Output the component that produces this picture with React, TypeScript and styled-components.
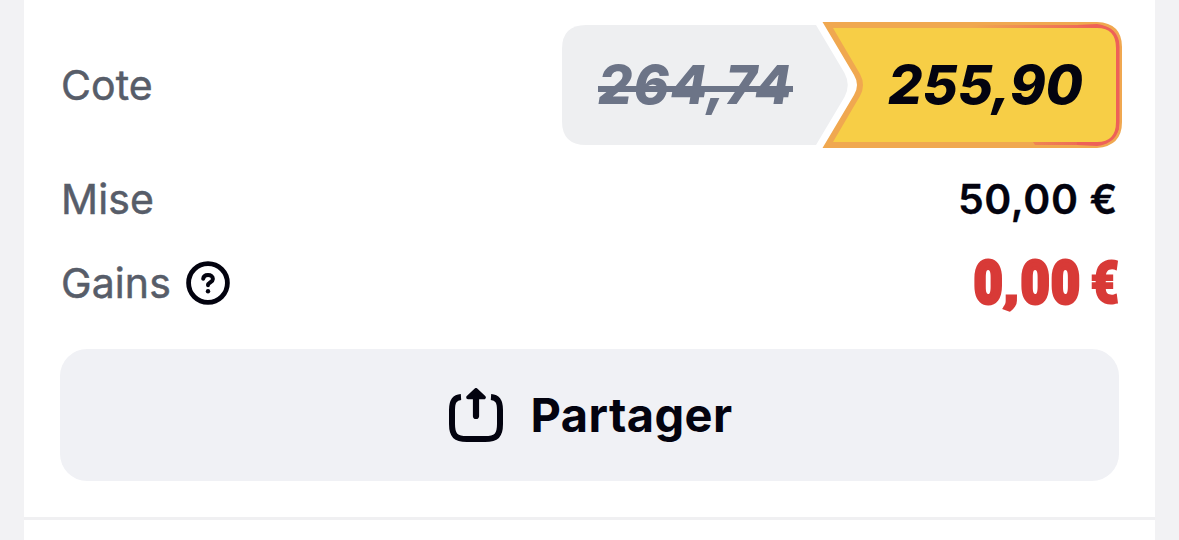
import styled, { createGlobalStyle } from "styled-components";

const EstiloGlobal = createGlobalStyle`
	* {
		box-sizing: border-box;
	}

	body {
		margin: 0;
		background-color: #f2f2f4;
		font-family: Inter, "Liberation Sans", sans-serif;
		color: #03030f;
	}
`;

const Pagina = styled.main`
	height: 540px;
	padding: 0 24px;
	overflow: hidden;
`;

const Cartao = styled.section`
	height: 517px;
	padding: 22px 36px 0;
	background-color: #ffffff;
`;

const ProximoCartao = styled.section`
	height: 23px;
	background-color: #ffffff;
	border-top: 3px solid #f0f0f2;
`;

const Linha = styled.div<{ $altura: number }>`
	height: ${({ $altura }) => $altura}px;
	display: flex;
	align-items: center;
	justify-content: space-between;
`;

const Rotulo = styled.span`
	display: flex;
	align-items: center;
	gap: 15px;
	font-size: 41px;
	line-height: 50px;
	font-weight: 400;
	letter-spacing: 0.1px;
	padding-left: 1px;
	color: #575d69;
	-webkit-text-stroke: 0.5px #575d69;
`;

const Cotes = styled.div`
	display: flex;
	align-items: center;
	height: 126px;
	margin-right: -3px;
`;

const Cote = styled.div<{ $largura: number; $recuo: number }>`
	position: relative;
	display: flex;
	align-items: center;
	width: ${({ $largura }) => $largura}px;
	height: 126px;
	padding-left: ${({ $recuo }) => $recuo}px;
`;

const CoteAtual = styled(Cote)`
	margin-left: -26px;
`;

const Fundo = styled.svg`
	position: absolute;
	inset: 0;
`;

const ValorCote = styled.span`
	position: relative;
	font-size: 54px;
	line-height: 64px;
	font-weight: 800;
	font-style: italic;
	white-space: nowrap;
`;

const ValorAntigo = styled(ValorCote)`
	color: #6c7487;
	letter-spacing: 1px;

	&::after {
		content: "";
		position: absolute;
		left: 0;
		right: 0;
		top: 33px;
		height: 6px;
		background-color: #6c7487;
	}
`;

const Mise = styled.span`
	margin-right: 1px;
	font-size: 41px;
	line-height: 50px;
	font-weight: 600;
	letter-spacing: 0.6px;
	-webkit-text-stroke: 0.3px #03030f;
	white-space: nowrap;
`;

const Gains = styled.span`
	font-family: Roboto, "Liberation Sans", sans-serif;
	font-size: 59px;
	line-height: 64px;
	font-weight: 900;
	letter-spacing: 2.2px;
	word-spacing: -6px;
	margin-right: -2px;
	color: #d83a37;
	-webkit-text-stroke: 4px #d83a37;
	transform: scaleX(0.83);
	transform-origin: right center;
	white-space: nowrap;
`;

const Virgula = styled.span`
	display: inline-block;
	margin: 0 1px;
	transform: scale(1.15, 0.75);
	transform-origin: center 46px;
`;

const Moeda = styled.span`
	-webkit-text-stroke-width: 2px;
`;

const BotaoPartager = styled.button`
	width: 1059px;
	height: 132px;
	margin: 34px 0 0;
	padding: 0 0 0 2px;
	display: flex;
	align-items: center;
	justify-content: center;
	gap: 28px;
	border: 0;
	border-radius: 27px;
	background-color: #f0f1f5;
	color: #03030f;
	font-family: inherit;
	font-size: 47px;
	line-height: 58px;
	font-weight: 700;
	letter-spacing: 0.4px;
`;

const IconeAjuda = () => (
	<svg width="44" height="44" viewBox="0 0 44 44" fill="none" stroke="#03030f">
		<circle cx="22" cy="22" r="19.4" strokeWidth="4.8" />
		<path
			d="M17.2 17.800c.3-2.400 2.200-3.800 4.800-3.800 2.800 0 4.900 1.500 4.900 4 0 3.300-4.700 3.200-4.900 6.200"
			strokeWidth="4"
			strokeLinecap="round"
			strokeLinejoin="round"
		/>
		<circle cx="22" cy="30.200" r="2.200" fill="#03030f" stroke="none" />
	</svg>
);

const IconePartager = () => (
	<svg width="54" height="54" viewBox="0 0 54 54" fill="none">
		<path
			d="M12 9.1C5.4 9.5 3 13.8 3 22v14c0 11.4 3.6 15 15 15h18c11.4 0 15-3.6 15-15V22c0-8.2-2.4-12.500-9-12.900"
			stroke="#03030f"
			strokeWidth="6"
		/>
		<path d="M27 9v19" stroke="#03030f" strokeWidth="6.200" strokeLinecap="round" />
		<path
			d="M27 1.800l8 7.600H19z"
			fill="#03030f"
			stroke="#03030f"
			strokeWidth="3.600"
			strokeLinejoin="round"
		/>
	</svg>
);

const FundoAntigo = () => (
	<Fundo width="287" height="126" viewBox="0 0 287 126">
		<path
			d="M25 3H255L283.500 51Q290 63 283.500 75L255 123H25Q1 123 1 99V27Q1 3 25 3Z"
			fill="#eeeff1"
		/>
	</Fundo>
);

const FundoAtual = () => (
	<Fundo width="300" height="126" viewBox="0 0 300 126">
		<defs>
			<linearGradient id="brilhoTopo" x1="150" x2="275" y1="0" y2="0" gradientUnits="userSpaceOnUse">
				<stop offset="0" stopColor="#f0a850" />
				<stop offset="1" stopColor="#ee6158" />
			</linearGradient>
		</defs>
		<path
			d="M0.500 0H275Q300 1 300 25V100Q300 124 275 126H0.500L32 73Q38 63 32 53Z"
			fill="#f0a850"
		/>
		<path
			d="M150 3H275Q297 4 297.500 25V100Q297 122 275 123H213L211 120H150Z"
			fill="url(#brilhoTopo)"
		/>
		{/* o vermelho engrossa nos cantos */}
		<path
			d="M255 3L275 2Q292 4 297 20L294 27L275 6ZM294 100L297 107Q290 123 275 124L255 123V120H275Z"
			fill="#ee6158"
		/>
		<path
			d="M11 6H275Q294 6 294 26V100Q294 120 275 120H11L38 74Q44 63 38 52Z"
			fill="#f7ce46"
		/>
	</Fundo>
);

const App = () => (
	<>
		<EstiloGlobal />
		<Pagina>
			<Cartao>
				<Linha $altura={126}>
					<Rotulo>Cote</Rotulo>
					<Cotes>
						<Cote $largura={287} $recuo={37}>
							<FundoAntigo />
							<ValorAntigo>264,74</ValorAntigo>
						</Cote>
						<CoteAtual $largura={300} $recuo={66}>
							<FundoAtual />
							<ValorCote>255,90</ValorCote>
						</CoteAtual>
					</Cotes>
				</Linha>
				<Linha $altura={102}>
					<Rotulo>Mise</Rotulo>
					<Mise>50,00 €</Mise>
				</Linha>
				<Linha $altura={65}>
					<Rotulo>
						Gains
						<IconeAjuda />
					</Rotulo>
					<Gains>
						0<Virgula>,</Virgula>00 <Moeda>€</Moeda>
					</Gains>
				</Linha>
				<BotaoPartager>
					<IconePartager />
					Partager
				</BotaoPartager>
			</Cartao>
			<ProximoCartao />
		</Pagina>
	</>
);

export default App;
